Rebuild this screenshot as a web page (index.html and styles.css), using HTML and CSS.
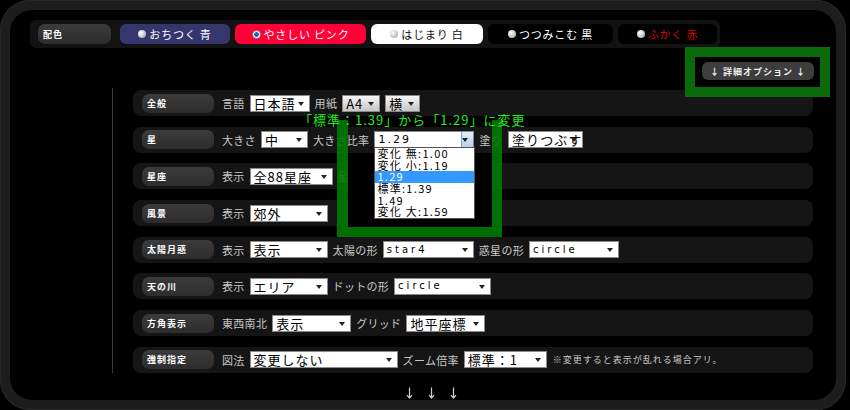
FILE: index.html
```html
<!DOCTYPE html>
<html lang="ja">
<head>
    <meta charset="UTF-8">
    <meta name="viewport" content="width=device-width, initial-scale=1.0">
    <link rel="stylesheet" href="styles.css">
    <title>星図 設定</title>
</head>
<body>

<div class="frame">
    <div class="panel">

        <div class="palette">
            <span class="pill pill-wide">配色</span>
            <span class="theme theme-blue"><i class="radio"></i>おちつく 青</span>
            <span class="theme theme-pink"><i class="radio on"></i>やさしい ピンク</span>
            <span class="theme theme-white"><i class="radio"></i>はじまり 白</span>
            <span class="theme theme-black"><i class="radio"></i>つつみこむ 黒</span>
            <span class="theme theme-red"><i class="radio"></i>ふかく 赤</span>
        </div>

        <div class="opt-row">
            <div class="mark">
                <span class="opt-btn">↓ 詳細オプション ↓</span>
            </div>
        </div>

        <div class="settings">
            <!-- 注釈 -->
            <div class="note-green">「標準：1.39」から「1.29」に変更</div>
            <div class="mark-box"></div>

            <div class="row">
                <span class="pill">全般</span>
                <span class="txt">言語</span>
                <span class="sel w60">日本語</span>
                <span class="txt">用紙</span>
                <span class="sel grey w38">A4</span>
                <span class="sel grey w35">横</span>
            </div>

            <div class="row">
                <span class="pill">星</span>
                <span class="txt">大きさ</span>
                <span class="sel w47">中</span>
                <span class="txt">大きさ比率</span>
                <span class="sel num open w100">1.29
                    <span class="drop-btn"></span>
                    <span class="list">
                        <span>変化 無:1.00</span>
                        <span>変化 小:1.19</span>
                        <span class="hit">1.29</span>
                        <span>標準:1.39</span>
                        <span>1.49</span>
                        <span>変化 大:1.59</span>
                    </span>
                </span>
                <span class="txt">塗り</span>
                <span class="sel w75 gap-l">塗りつぶす</span>
            </div>

            <div class="row">
                <span class="pill">星座</span>
                <span class="txt">表示</span>
                <span class="sel w83">全88星座</span>
                <span class="txt">星座線</span>
            </div>

            <div class="row">
                <span class="pill">風景</span>
                <span class="txt">表示</span>
                <span class="sel w78">郊外</span>
            </div>

            <div class="row">
                <span class="pill">太陽月惑</span>
                <span class="txt">表示</span>
                <span class="sel w78">表示</span>
                <span class="txt">太陽の形</span>
                <span class="sel latin w91">star4</span>
                <span class="txt">惑星の形</span>
                <span class="sel latin w90">circle</span>
            </div>

            <div class="row">
                <span class="pill">天の川</span>
                <span class="txt">表示</span>
                <span class="sel w78">エリア</span>
                <span class="txt">ドットの形</span>
                <span class="sel latin w97">circle</span>
            </div>

            <div class="row">
                <span class="pill">方角表示</span>
                <span class="txt">東西南北</span>
                <span class="sel w79">表示</span>
                <span class="txt">グリッド</span>
                <span class="sel w79">地平座標</span>
            </div>

            <div class="row">
                <span class="pill">強制指定</span>
                <span class="txt">図法</span>
                <span class="sel w148">変更しない</span>
                <span class="txt">ズーム倍率</span>
                <span class="sel w83">標準：1</span>
                <span class="small">※変更すると表示が乱れる場合アリ。</span>
            </div>
        </div>

        <div class="more">
            <svg class="arrow" viewBox="0 0 7 12"><path d="M3.5 0.5V11M1 8.2L3.5 11L6 8.2"/></svg>
            <svg class="arrow" viewBox="0 0 7 12"><path d="M3.5 0.5V11M1 8.2L3.5 11L6 8.2"/></svg>
            <svg class="arrow" viewBox="0 0 7 12"><path d="M3.5 0.5V11M1 8.2L3.5 11L6 8.2"/></svg>
        </div>

    </div>
</div>

</body>
</html>
```

FILE: styles.css
```css
body {
    margin: 0;
    background-color: #000;
    font-family: "Noto Sans CJK JP", "Noto Sans", sans-serif;
}

.frame {
    width: 826px;
    height: 390px;
    padding: 10px;
    background-color: #1d1d1d;
    border-radius: 30px;
    box-shadow: inset 0 0 0 1px #282828;
}

.panel {
    height: 100%;
    box-sizing: border-box;
    padding: 10px 0 0 20px;
    background-color: #000;
    border-radius: 22px;
    overflow: hidden;
}

/* 配色 */
.palette {
    display: flex;
    align-items: center;
    gap: 5px;
    width: 690px;
    height: 28px;
    box-sizing: border-box;
    padding-left: 8px;
    background-color: #121212;
    border-radius: 6px;
}

.pill {
    display: flex;
    align-items: center;
    flex: none;
    width: 72px;
    height: 19px;
    box-sizing: border-box;
    padding-left: 5px;
    margin-right: 3px;
    background: linear-gradient(#3b3b3b, #2d2d2d);
    border-radius: 7px;
    color: #fff;
    font-size: 9px;
    font-weight: bold;
    letter-spacing: 1px;
}

.pill-wide {
    width: 73px;
    height: 20px;
    margin-right: 4px;
}

.theme {
    display: flex;
    align-items: center;
    justify-content: center;
    height: 20px;
    border-radius: 6px;
    color: #fff;
    font-size: 11px;
    letter-spacing: 0.8px;
}

.theme-blue { width: 110px; background-color: #36366f; }
.theme-pink { width: 131px; background-color: #ff0037; }
.theme-white { width: 112px; background-color: #fff; color: #111; }
.theme-black { width: 125px; background-color: #000; }
.theme-red { width: 99px; background-color: #000; color: #d00; }

.radio {
    width: 8px;
    height: 8px;
    margin-right: 3px;
    border-radius: 50%;
    background: radial-gradient(circle at 35% 35%, #fff, #9a9a9a);
}

.radio.on {
    width: 7px;
    height: 7px;
    border: 1px solid #8a8a8a;
    background: radial-gradient(circle, #1f63c4 0 2px, #fff 2.6px);
}

/* 詳細オプション */
.opt-row {
    position: relative;
    z-index: 1;
    display: flex;
    justify-content: flex-end;
    margin: -1px 0 -9px;
    padding-right: 6px;
}

.mark {
    border: 10px solid #0b6a0b;
    padding: 5px 6px 7px 7px;
}

.opt-btn {
    display: flex;
    align-items: center;
    justify-content: center;
    width: 112px;
    height: 18px;
    background-color: #3d3d3d;
    border-radius: 6px;
    color: #eee;
    font-size: 9px;
    font-weight: bold;
    letter-spacing: 1px;
}

/* 設定 */
.settings {
    position: relative;
    display: flex;
    flex-direction: column;
    gap: 10.7px;
    width: 680px;
    margin-left: 82px;
    padding: 2px 0 0 20px;
    border-left: 1px solid #3a3a3a;
}

.row {
    display: flex;
    align-items: center;
    gap: 5px;
    height: 26px;
    padding-left: 9px;
    background-color: #151515;
    border-radius: 8px;
    color: #c8c8c8;
    font-size: 11px;
    letter-spacing: 0.3px;
    white-space: nowrap;
}

.sel {
    position: relative;
    display: flex;
    align-items: center;
    flex: none;
    height: 17px;
    box-sizing: border-box;
    padding-left: 3px;
    background-color: #fff;
    border: 1px solid #8a8a8a;
    color: #000;
    font-size: 13px;
    letter-spacing: 1px;
    line-height: 1;
}

.sel::after {
    content: "";
    position: absolute;
    right: 5px;
    top: 6px;
    border-left: 3px solid transparent;
    border-right: 3px solid transparent;
    border-top: 4px solid #222;
}

.sel.grey {
    background: linear-gradient(#f6f6f6, #c6c6c6);
}

.sel.latin {
    font-family: "DejaVu Sans", sans-serif;
    font-size: 10px;
    letter-spacing: 3px;
}

.sel.num {
    font-family: "DejaVu Sans", sans-serif;
    font-size: 11px;
    letter-spacing: 2px;
}

.gap-l {
    margin-left: 1px;
}

.w35 { width: 35px; }
.w38 { width: 38px; }
.w47 { width: 47px; }
.w60 { width: 60px; }
.w75 { width: 75px; }
.w78 { width: 78px; }
.w79 { width: 79px; }
.w83 { width: 83px; }
.w90 { width: 90px; }
.w91 { width: 91px; }
.w97 { width: 97px; }
.w100 { width: 100px; }
.w148 { width: 148px; }

.drop-btn {
    position: absolute;
    top: 0;
    right: 0;
    width: 12px;
    height: 100%;
    box-sizing: border-box;
    background: linear-gradient(#e4eef9, #b6d0ec);
    border-left: 1px solid #7fa6d2;
}

.list {
    position: absolute;
    top: 100%;
    left: -1px;
    z-index: 3;
    width: 101px;
    box-sizing: border-box;
    background-color: #fff;
    border: 1px solid #555;
    font-family: "Noto Sans CJK JP", sans-serif;
    font-size: 11px;
    letter-spacing: 1.3px;
}

.list span {
    display: block;
    height: 11.6px;
    line-height: 11.6px;
    padding-left: 2px;
}

.list .hit {
    background-color: #3399ff;
    color: #fff;
}

.small {
    margin-left: 1px;
    font-size: 9px;
    letter-spacing: 1px;
}

/* 注釈 */
.note-green {
    position: absolute;
    left: 186px;
    top: 22px;
    z-index: 4;
    color: #22e822;
    font-size: 13px;
    letter-spacing: 1px;
    white-space: nowrap;
}

.mark-box {
    position: absolute;
    left: 224px;
    top: 32px;
    z-index: 2;
    width: 144px;
    height: 107px;
    border-style: solid;
    border-color: rgba(0, 122, 0, 0.9);
    border-width: 0 10px 10px 11px;
    background: linear-gradient(transparent 35px, #000 35px);
    background-clip: padding-box;
}

.more {
    display: flex;
    justify-content: center;
    gap: 15px;
    margin-top: 14px;
    padding-right: 4px;
}

.arrow {
    width: 7px;
    height: 12px;
    fill: none;
    stroke: #d0d0d0;
    stroke-width: 1.2;
}
```
